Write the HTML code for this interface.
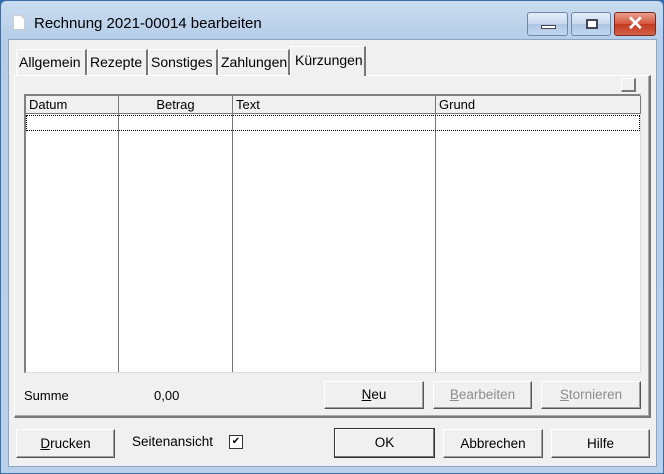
<!DOCTYPE html>
<html><head><meta charset="utf-8"><style>
*{box-sizing:border-box;margin:0;padding:0}
body{width:664px;height:474px;overflow:hidden;background:#2f6fb5;font-family:"Liberation Sans",Arial,sans-serif;font-size:13px;color:#000;position:relative}
.win{position:absolute;left:0;top:0;width:664px;height:474px;background:linear-gradient(#c9dcf0,#b5cde8 40px,#b9d1ea);border:1px solid #3a6ea8;border-radius:6px 6px 0 0}
.client{position:absolute;left:8px;top:39px;width:649px;height:428px;background:#f0f0f0;border:1px solid #8aa6c6}
.abs{position:absolute}
.title{left:34px;top:15px;font-size:15px;color:#000}
.tb{top:12px;height:24px;border:1px solid #6e86a6;border-radius:3px;background:linear-gradient(#e4eefa,#c6d8ee 50%,#aec6e4 51%,#c2d6ee)}
.close{background:linear-gradient(#e9a08e,#d5553c 50%,#c2391f 51%,#d3624a);border-color:#7a2a1e}
.tab{top:49px;height:26px;border:1px solid #fff;border-right:2px solid #777;border-bottom:none;background:#f0f0f0;padding:4px 2px 0 2px;white-space:nowrap;font-size:14px}
.panel{left:14px;top:75px;width:637px;height:343px;border-top:1px solid #fff;border-left:1px solid #fff;border-right:2px solid #777;border-bottom:2px solid #777;box-shadow:inset -1px -1px 0 #aaa}
.list{left:24px;top:94px;width:617px;height:279px;background:#fff;border-top:2px solid #808080;border-left:2px solid #808080;border-right:1px solid #ddd;border-bottom:1px solid #ddd}
.hd{top:0;height:18px;background:#f0f0f0;border-right:1px solid #777;border-bottom:1px solid #777;padding:1px 3px}
.col{top:18px;bottom:0;border-right:1px solid #777}
.btn{height:28px;border:1px solid #fff;border-right:1px solid #555;border-bottom:1px solid #555;background:#f0f0f0;box-shadow:inset -1px -1px 0 #a0a0a0;text-align:center;line-height:26px;font-size:13.5px}
.dis{color:#8d8d8d}
u{text-decoration:underline}
</style></head><body>
<div class="win"></div>
<svg class="abs" style="left:13px;top:15px" width="12" height="15"><path d="M0.5 0.5H8L11.5 4V14.5H0.5Z" fill="#fff" stroke="#ccc"/></svg>
<div class="abs title">Rechnung 2021-00014 bearbeiten</div>
<div class="abs tb" style="left:527px;width:41px"><div class="abs" style="left:13px;top:12px;width:15px;height:4px;background:#fff;border:1px solid #445"></div></div>
<div class="abs tb" style="left:571px;width:40px"><div class="abs" style="left:14px;top:6px;width:12px;height:10px;border:2px solid #445;background:#fff"></div></div>
<div class="abs tb close" style="left:614px;width:42px"><div class="abs" style="left:12px;top:0px;color:#fff;font-size:20px;font-weight:bold;line-height:22px">✕</div></div>
<div class="client"></div>
<div class="abs panel"></div>
<div class="abs tab" style="left:16px;width:71px">Allgemein</div>
<div class="abs tab" style="left:87px;width:61px">Rezepte</div>
<div class="abs tab" style="left:148px;width:70px">Sonstiges</div>
<div class="abs tab" style="left:218px;width:72px">Zahlungen</div>
<div class="abs tab" style="left:290px;top:46px;height:30px;width:76px;padding-top:5px;padding-left:4px;border-bottom:none;z-index:2">Kürzungen</div>
<div class="abs" style="left:621px;top:78px;width:15px;height:14px;border:1px solid #fff;border-right:2px solid #777;border-bottom:2px solid #777;background:#f0f0f0"></div>
<div class="abs list">
 <div class="abs hd" style="left:0;width:93px">Datum</div>
 <div class="abs hd" style="left:93px;width:114px;text-align:center">Betrag</div>
 <div class="abs hd" style="left:207px;width:203px">Text</div>
 <div class="abs hd" style="left:410px;width:205px">Grund</div>
 <div class="abs col" style="left:0;width:93px"></div>
 <div class="abs col" style="left:93px;width:114px"></div>
 <div class="abs col" style="left:207px;width:203px"></div>
 <div class="abs" style="left:0;top:19px;width:614px;height:16px;border:1px dotted #000"></div>
</div>
<div class="abs" style="left:24px;top:388px">Summe</div>
<div class="abs" style="left:154px;top:388px">0,00</div>
<div class="abs btn" style="left:324px;top:381px;width:100px"><u>N</u>eu</div>
<div class="abs btn dis" style="left:433px;top:381px;width:99px"><u>B</u>earbeiten</div>
<div class="abs btn dis" style="left:541px;top:381px;width:100px"><u>S</u>tornieren</div>
<div class="abs btn" style="left:16px;top:429px;width:99px;height:29px;line-height:27px"><u>D</u>rucken</div>
<div class="abs" style="left:132px;top:434px;font-size:13.5px">Seitenansicht</div>
<div class="abs" style="left:229px;top:435px;width:14px;height:14px;border:1px solid #333;background:#fff;font-size:10px;line-height:12px;text-align:center">✔</div>
<div class="abs btn" style="left:334px;top:428px;width:101px;height:30px;border:1px solid #333;box-shadow:inset -1px -1px 0 #777,inset 1px 1px 0 #fff;line-height:28px">OK</div>
<div class="abs btn" style="left:443px;top:429px;width:100px;height:29px;line-height:27px">Abbrechen</div>
<div class="abs btn" style="left:551px;top:429px;width:99px;height:29px;line-height:27px">Hilfe</div>
</body></html>
